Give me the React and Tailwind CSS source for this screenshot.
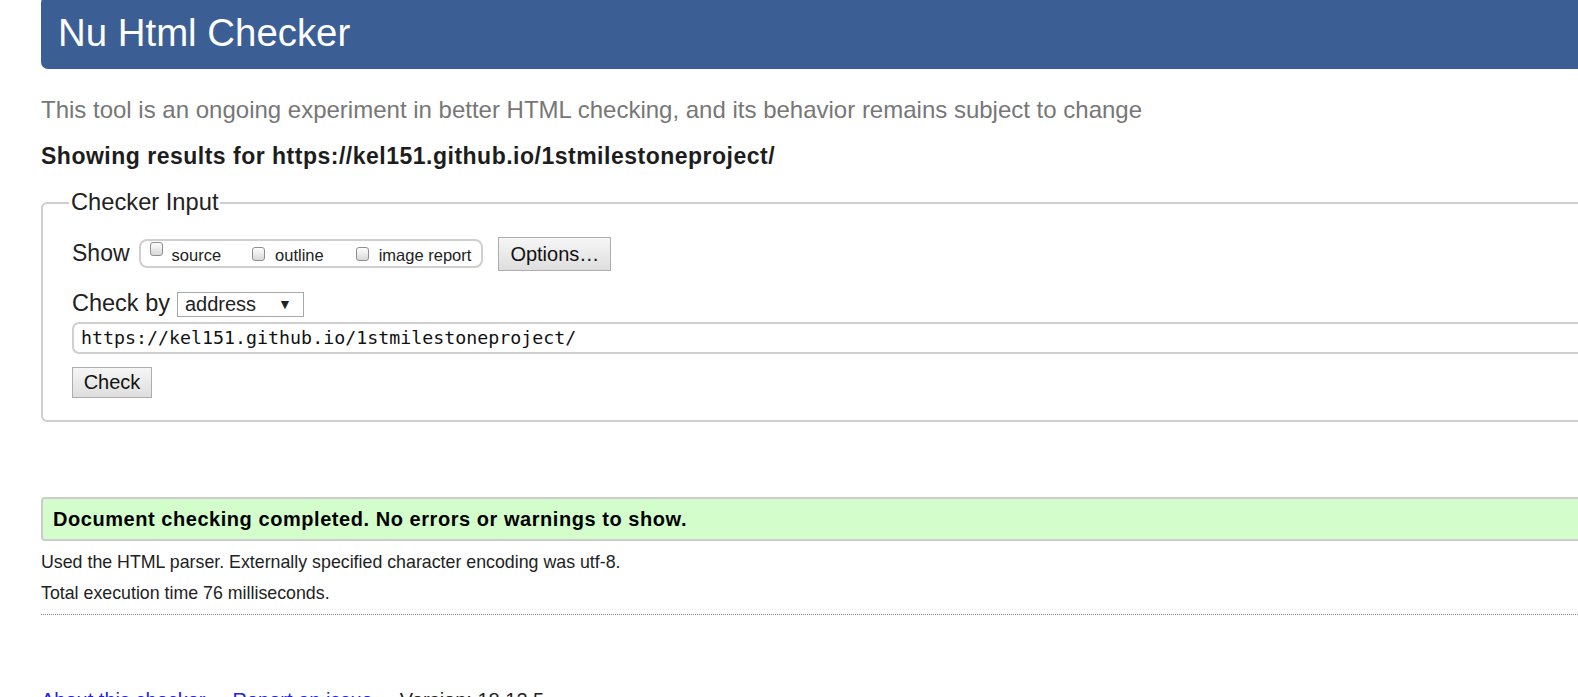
import React from "react";

function Checkbox() {
  return (
    <span className="inline-block w-[13px] h-[14px] rounded-[3px] border border-[#8f8f8f] bg-gradient-to-b from-[#fdfdfd] to-[#d9d9d9] self-start mt-[1px]" />
  );
}

function GrayButton({ children, className = "" }) {
  return (
    <button
      type="button"
      className={`border border-[#adadad] bg-gradient-to-b from-[#f6f6f6] to-[#dedede] text-[#111] leading-none ${className}`}
    >
      {children}
    </button>
  );
}

export default function App() {
  return (
    <div className="w-screen h-screen overflow-hidden bg-white font-['Liberation_Sans',Arial,sans-serif] text-[#222]">
      <div className="w-[1640px] pl-[41px]">
        {/* HEADER */}
        <div className="-mt-[4px] h-[73px] rounded-[7px] bg-[#3b5e95] pl-[17px] pt-[18px]">
          <h1 className="text-[38.4px] leading-none text-white">Nu Html Checker</h1>
        </div>

        <p className="mt-[29px] text-[24px] leading-none text-[#777]">
          This tool is an ongoing experiment in better HTML checking, and its behavior remains subject to change
        </p>

        <p className="mt-[23px] text-[23px] leading-none font-bold tracking-[0.5px] text-[#1d1d1d]">
          Showing results for https://kel151.github.io/1stmilestoneproject/
        </p>

        {/* CHECKER INPUT */}
        <fieldset className="mt-[23px] border-2 border-[#cfcfcf] rounded-[6px] p-0">
          <legend className="ml-[26px] px-[2px] text-[23.7px] leading-none text-[#222]">Checker Input</legend>
          <div className="pl-[29px] pt-[22px] pb-[22px]">
            <div className="flex items-center h-[34px]">
              <span className="text-[23px] leading-none">Show</span>
              <div className="ml-[9px] h-[29px] flex items-center border-2 border-[#cfcfcf] rounded-[8px] pl-[9px] pr-[10px] text-[16.5px] leading-none">
                <Checkbox />
                <span className="ml-[9px] mt-[4px]">source</span>
                <span className="ml-[31px] flex"><Checkbox /></span>
                <span className="ml-[10px] mt-[4px]">outline</span>
                <span className="ml-[32px] flex"><Checkbox /></span>
                <span className="ml-[10px] mt-[4px]">image report</span>
              </div>
              <GrayButton className="ml-[15px] w-[113px] h-[34px] text-[20px]">Options…</GrayButton>
            </div>

            <div className="mt-[21px] flex items-center">
              <span className="text-[23.5px] leading-none">Check by</span>
              <div className="ml-[7px] w-[127px] h-[25px] border border-[#a9a9a9] flex items-center justify-between pl-[7px] pr-[11px] text-[20px] leading-none">
                <span>address</span>
                <span className="text-[14px]">▼</span>
              </div>
            </div>

            <div className="mt-[5px] h-[32px] border-2 border-[#cfcfcf] rounded-[7px] flex items-center pl-[7px] font-['DejaVu_Sans_Mono',monospace] text-[18.3px] leading-none text-[#111]">
              https://kel151.github.io/1stmilestoneproject/
            </div>

            <GrayButton className="mt-[13px] w-[80px] h-[31px] text-[20px]">Check</GrayButton>
          </div>
        </fieldset>

        {/* RESULT */}
        <div className="mt-[75px] h-[44px] border-2 border-[#cccccc] rounded-[4px] bg-[#d3fecc] flex items-center pl-[10px]">
          <span className="text-[20px] leading-none font-bold tracking-[0.55px] text-black">
            Document checking completed. No errors or warnings to show.
          </span>
        </div>

        <p className="mt-[13px] text-[17.8px] leading-none">
          Used the HTML parser. Externally specified character encoding was utf-8.
        </p>
        <p className="mt-[13px] text-[17.8px] leading-none">Total execution time 76 milliseconds.</p>
        <div className="mt-[12px] border-t border-dotted border-[#888]" />

        {/* FOOTER */}
        <div className="mt-[75px] flex gap-[10px] text-[20px] leading-none">
          <a href="#" className="text-[#2121e0]">About this checker</a>
          <span className="text-[#222]">•</span>
          <a href="#" className="text-[#2121e0]">Report an issue</a>
          <span className="text-[#222]">•</span>
          <span>Version: 18.12.5</span>
        </div>
      </div>
    </div>
  );
}
